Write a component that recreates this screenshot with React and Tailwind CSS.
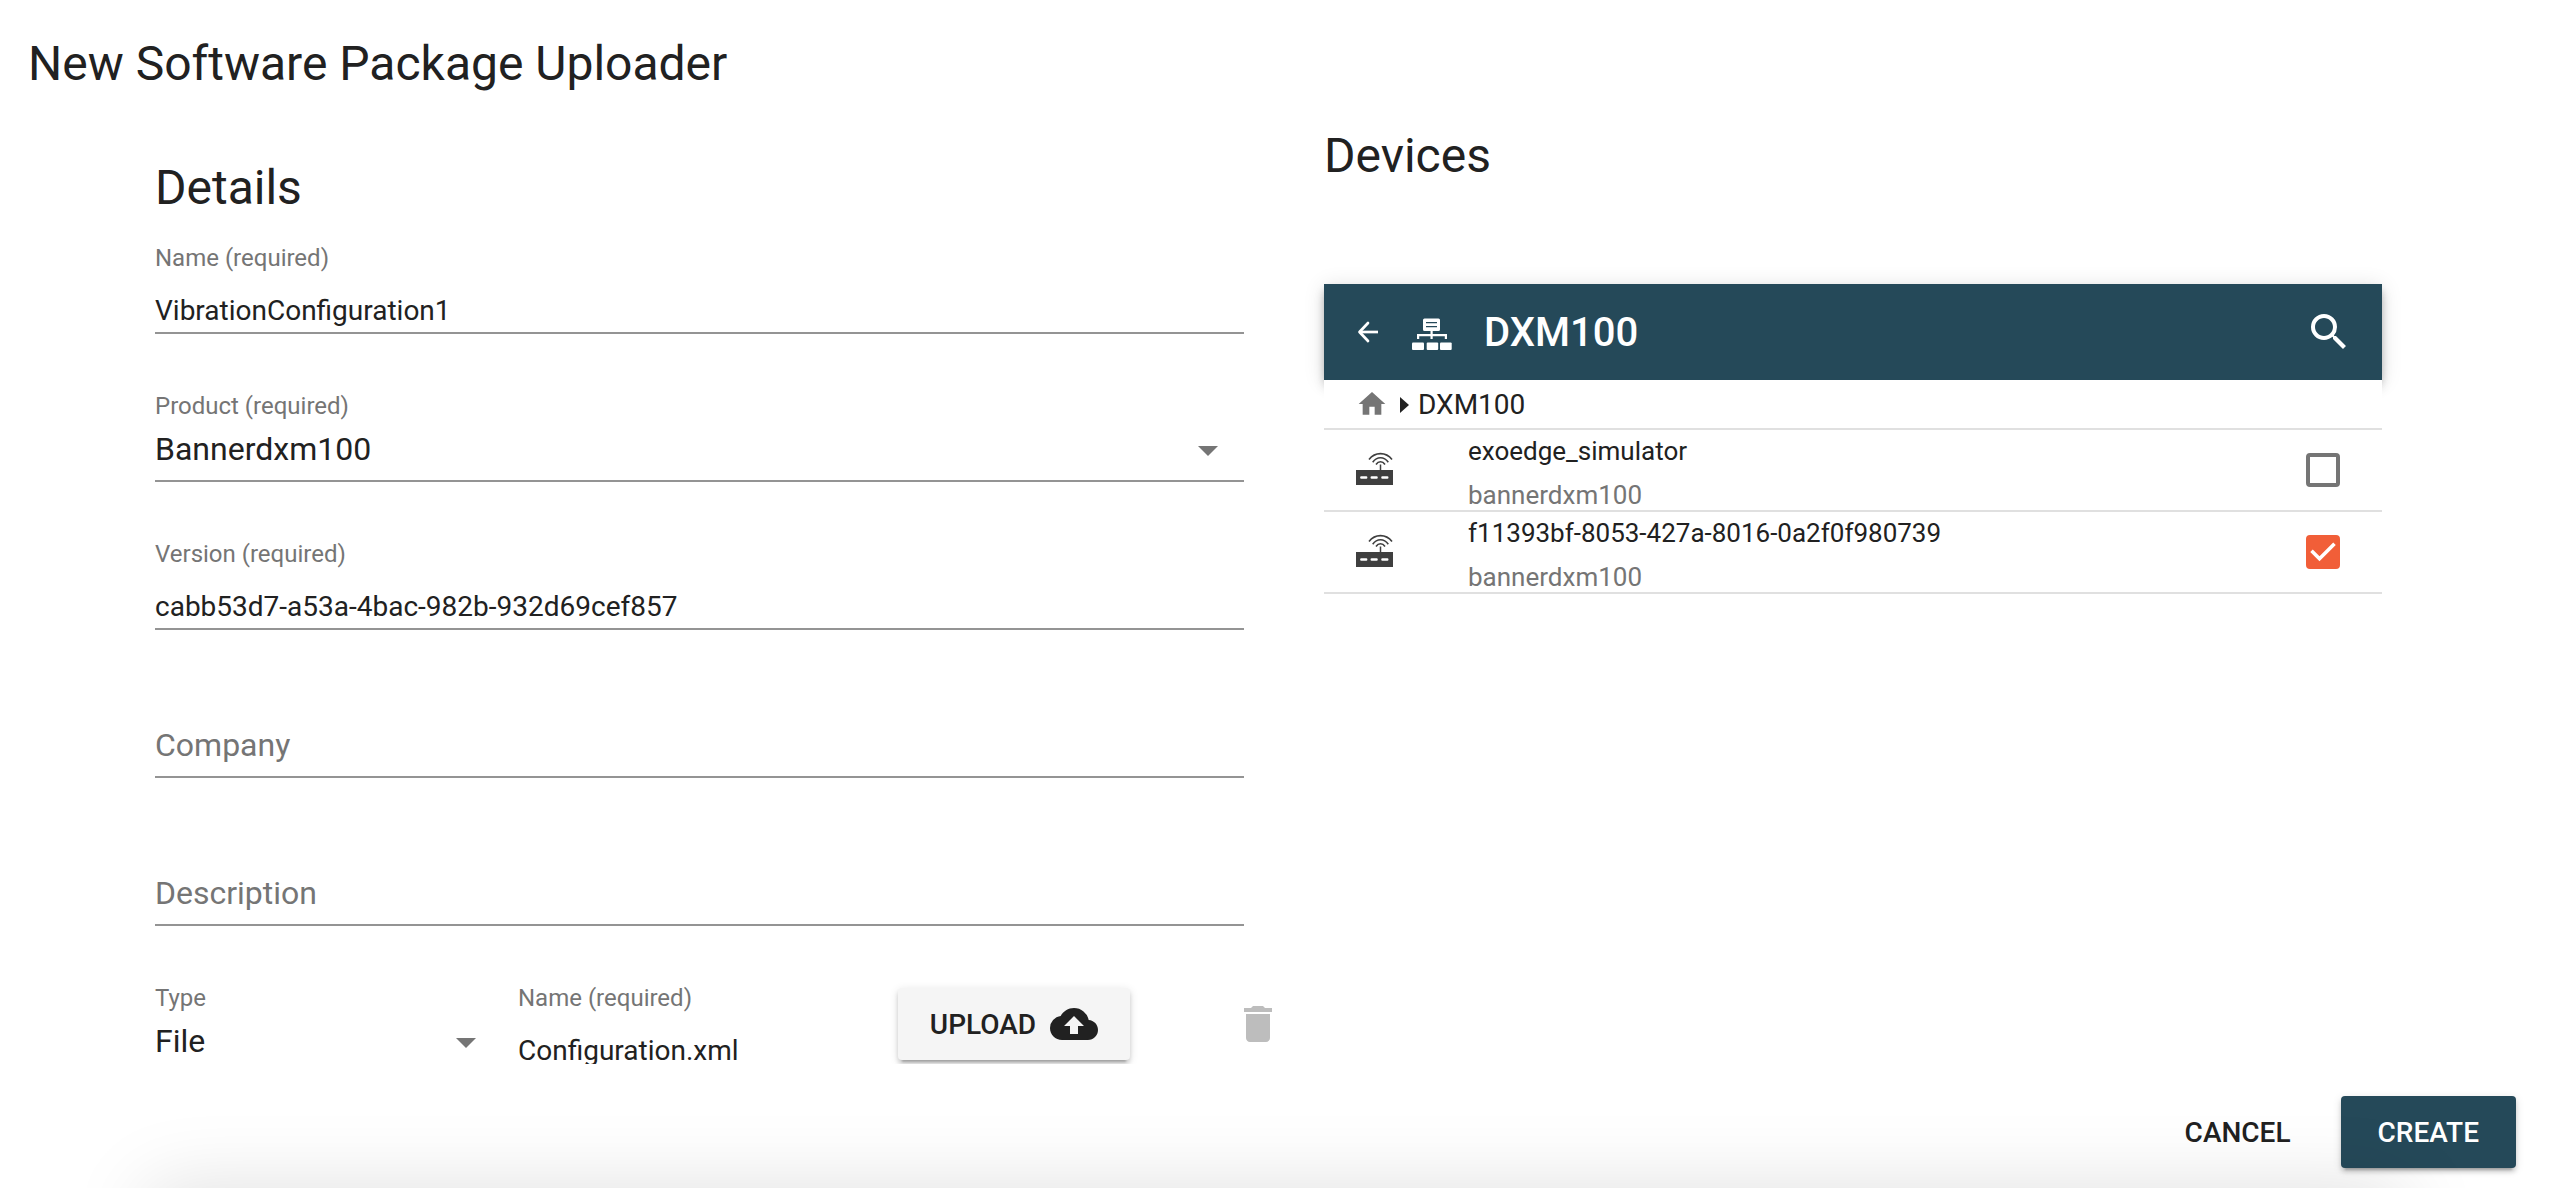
import React, { useId, useState } from "react";
import { MdCloudUpload, MdDelete, MdHome, MdSearch } from "react-icons/md";

const labelClass = "block text-2xl leading-8 text-[#757575]";

function Field({ children, className = "" }) {
  return <div className={`flex h-[92px] flex-col justify-end ${className}`}>{children}</div>;
}

function TextField({ label, value, className }) {
  const id = useId();
  return (
    <Field className={className}>
      <label htmlFor={id} className={labelClass}>{label}</label>
      <input
        id={id}
        type="text"
        defaultValue={value}
        className="h-[60px] w-full border-b-2 border-[#949494] bg-transparent pt-[15px] text-[28px] outline-none"
      />
    </Field>
  );
}

function EmptyField({ label }) {
  return (
    <Field>
      <input
        type="text"
        aria-label={label}
        placeholder={label}
        className="h-[60px] w-full border-b-2 border-[#949494] bg-transparent pb-1 text-[32px] outline-none placeholder:text-[#757575]"
      />
    </Field>
  );
}

function SelectField({ label, options, arrowClass, className }) {
  const id = useId();
  return (
    <Field className={className}>
      <label htmlFor={id} className={labelClass}>{label}</label>
      <div className="relative">
        <select
          id={id}
          className="block h-[60px] w-full appearance-none border-b-2 border-[#949494] bg-transparent pb-1 text-[32px] outline-none"
        >
          {options.map((o) => <option key={o}>{o}</option>)}
        </select>
        <svg viewBox="0 0 20 10" className={`pointer-events-none absolute top-6 h-[10px] w-5 ${arrowClass}`} fill="#757575">
          <path d="M0 0h20L10 10z" />
        </svg>
      </div>
    </Field>
  );
}

function BackIcon() {
  return (
    <svg viewBox="0 0 24 24" className="size-6" fill="none" stroke="white" strokeWidth="2.7" strokeLinecap="round" strokeLinejoin="round">
      <path d="M12 3 3.5 12 12 21" />
      <path d="M4 12h18" strokeLinecap="butt" />
    </svg>
  );
}

function HierarchyIcon() {
  return (
    <svg viewBox="0 0 40 32" className="h-8 w-10" fill="white">
      <path fillRule="evenodd" d="M12.5.5h14q1.5 0 1.5 1.5v9.5q0 1.5-1.5 1.5h-14q-1.5 0-1.5-1.5V2q0-1.5 1.5-1.5zM14 4v1.300h11V4zM14 8v1.300h11V8z" />
      <path d="M18.5 13h2.200v3h14.300v5h-2.200v-2.700H20.700V21h-2.200v-2.700H7.200V21H5v-5h13.500z" />
      <rect x="0" y="24.5" width="12" height="7.5" rx="1" />
      <rect x="14.7" y="24.5" width="11.5" height="7.5" rx="1" />
      <rect x="28" y="24.5" width="11.7" height="7.5" rx="1" />
    </svg>
  );
}

function GatewayIcon() {
  return (
    <svg viewBox="0 0 37 33" className="mb-[3px] h-[33px] w-[37px]" fill="none" stroke="#3f3f3f">
      <path d="M0 18h37v15H0z" fill="#3f3f3f" stroke="none" />
      <path d="M24.5 12.5V18" strokeWidth="1.5" />
      <path d="M13 7.500C19 -.3 30 -.3 36 7.500M16.700 10.200C21 4.300 28 4.300 32.300 10.200M20 12.500C22.500 8.800 26.500 8.800 29 12.500" strokeWidth="1.6" />
      <path d="M5.300 25.500h4.900M15.700 25.500h4.900M26.400 25.500h4.900" stroke="white" strokeWidth="2.4" strokeLinecap="round" />
    </svg>
  );
}

function DeviceRow({ name, product, checked: initial }) {
  const [checked, setChecked] = useState(initial);
  const id = useId();
  return (
    <li className="flex h-[82px] items-center border-b-2 border-[#e0e0e0] pl-8 pr-[37px]">
      <GatewayIcon />
      <label htmlFor={id} className="ml-[75px] flex-1 pt-[6px] text-[26px] leading-[44px]">
        <span className="block">{name}</span>
        <span className="block text-[#757575]">{product}</span>
      </label>
      <span className="grid size-11 place-items-center">
        <input
          id={id}
          type="checkbox"
          checked={checked}
          onChange={(e) => setChecked(e.target.checked)}
          className="size-[34px] appearance-none rounded-[4px] border-4 border-[#757575] [grid-area:1/1] checked:border-[#f15e38] checked:bg-[#f15e38]"
        />
        {checked && (
          <svg viewBox="0 0 34 34" className="pointer-events-none size-[34px] [grid-area:1/1]" fill="none" stroke="white" strokeWidth="3.6">
            <path d="m5.500 15.800 8 8L28.500 8.800" />
          </svg>
        )}
      </span>
    </li>
  );
}

export default function App() {
  return (
    <div className="relative flex h-screen flex-col overflow-hidden bg-white font-['Roboto',sans-serif] text-[#212121]">
      <header className="h-24 shrink-0 px-[28px] pt-8">
        <h1 className="text-5xl leading-[64px]">New Software Package Uploader</h1>
      </header>

      <main className="grid min-h-0 flex-1 grid-cols-2 overflow-y-auto [scrollbar-width:none]">
        <section className="pl-[155px] pr-8 pt-[60px]">
          <h2 className="text-5xl leading-[64px]">Details</h2>
          <form className="mt-[22px] flex flex-col gap-14">
            <TextField label="Name (required)" value="VibrationConfiguration1" />
            <SelectField label="Product (required)" options={["Bannerdxm100"]} arrowClass="right-[26px]" />
            <TextField label="Version (required)" value="cabb53d7-a53a-4bac-982b-932d69cef857" />
            <EmptyField label="Company" />
            <EmptyField label="Description" />
            <div className="-mr-10 flex items-start">
              <SelectField label="Type" options={["File"]} className="w-[331px] shrink-0" arrowClass="right-[10px]" />
              <TextField label="Name (required)" value="Configuration.xml" className="ml-8 w-[340px] shrink-0" />
              <button
                type="button"
                className="ml-10 mt-[6px] flex h-[72px] w-[232px] shrink-0 items-center justify-center gap-[14px] rounded-[4px] bg-[#f5f5f5] text-[28px] font-medium shadow-[0_6px_2px_-4px_rgba(0,0,0,0.2),0_4px_4px_rgba(0,0,0,0.14),0_2px_10px_rgba(0,0,0,0.12)]"
              >
                <span className="pt-[2px]">UPLOAD</span>
                <MdCloudUpload className="size-12" />
              </button>
              <button type="button" aria-label="Delete file" className="ml-auto mt-[18px] mr-[2px] text-[#bdbdbd]">
                <MdDelete className="size-12" />
              </button>
            </div>
          </form>
        </section>

        <section className="pl-12 pr-[170px] pt-7">
          <h2 className="text-5xl leading-[64px]">Devices</h2>
          <div className="mt-24">
            <div className="flex h-24 items-center bg-[#254959] pl-8 pr-[29px] text-white shadow-[0_4px_8px_-2px_rgba(0,0,0,0.2),0_8px_10px_rgba(0,0,0,0.14),0_2px_20px_rgba(0,0,0,0.12)]">
              <button type="button" aria-label="Back"><BackIcon /></button>
              <span className="ml-8 pt-[3px]"><HierarchyIcon /></span>
              <h3 className="ml-8 flex-1 pt-[2px] text-[40px] font-medium leading-[56px]">DXM100</h3>
              <button type="button" aria-label="Search"><MdSearch className="size-12" /></button>
            </div>
            <nav aria-label="Breadcrumb" className="relative flex h-[50px] items-center border-b-2 border-[#e0e0e0] bg-white pl-8 text-[28px]">
              <a href="#home" aria-label="Home" className="text-[#757575]"><MdHome className="size-8" /></a>
              <svg viewBox="0 0 9 16" className="ml-3 mt-[2px] h-4 w-[9px]" fill="#212121"><path d="M0 0v16l9-8z" /></svg>
              <a href="#dxm100" className="ml-[9px] pt-[2px]">DXM100</a>
            </nav>
            <ul>
              <DeviceRow name="exoedge_simulator" product="bannerdxm100" checked={false} />
              <DeviceRow name="f11393bf-8053-427a-8016-0a2f0f980739" product="bannerdxm100" checked />
            </ul>
          </div>
        </section>
      </main>

      <footer className="flex h-[124px] shrink-0 items-start justify-end gap-[14px] pr-9 pt-8 text-[28px] font-medium">
        <button type="button" className="h-[72px] rounded-[4px] px-9 pt-[2px]">CANCEL</button>
        <button
          type="button"
          className="h-[72px] rounded-[4px] bg-[#254959] px-[37px] pt-[2px] text-white shadow-[0_6px_2px_-4px_rgba(0,0,0,0.2),0_4px_4px_rgba(0,0,0,0.14),0_2px_10px_rgba(0,0,0,0.12)]"
        >
          CREATE
        </button>
      </footer>

      <div className="pointer-events-none absolute left-[148px] right-[148px] top-full h-24 shadow-[0_0_80px_rgba(0,0,0,0.13)]" />
    </div>
  );
}
